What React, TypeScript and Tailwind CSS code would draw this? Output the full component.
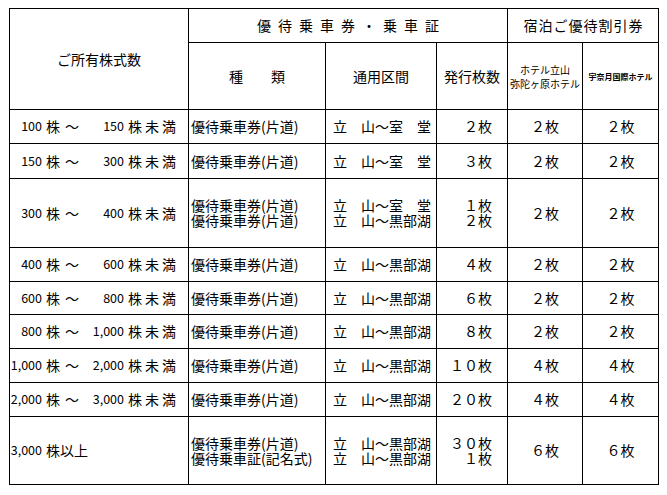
import React from 'react';

type Row = {
  a: string;
  b?: string;
  type: string[];
  sec: string[];
  n: string[];
  h1: string;
  h2: string;
};

const rows: Row[] = [
  { a: '100', b: '150', type: ['優待乗車券(片道)'], sec: ['立　山～室　堂'], n: ['２枚'], h1: '２枚', h2: '２枚' },
  { a: '150', b: '300', type: ['優待乗車券(片道)'], sec: ['立　山～室　堂'], n: ['３枚'], h1: '２枚', h2: '２枚' },
  { a: '300', b: '400', type: ['優待乗車券(片道)', '優待乗車券(片道)'], sec: ['立　山～室　堂', '立　山～黒部湖'], n: ['１枚', '２枚'], h1: '２枚', h2: '２枚' },
  { a: '400', b: '600', type: ['優待乗車券(片道)'], sec: ['立　山～黒部湖'], n: ['４枚'], h1: '２枚', h2: '２枚' },
  { a: '600', b: '800', type: ['優待乗車券(片道)'], sec: ['立　山～黒部湖'], n: ['６枚'], h1: '２枚', h2: '２枚' },
  { a: '800', b: '1,000', type: ['優待乗車券(片道)'], sec: ['立　山～黒部湖'], n: ['８枚'], h1: '２枚', h2: '２枚' },
  { a: '1,000', b: '2,000', type: ['優待乗車券(片道)'], sec: ['立　山～黒部湖'], n: ['１０枚'], h1: '４枚', h2: '４枚' },
  { a: '2,000', b: '3,000', type: ['優待乗車券(片道)'], sec: ['立　山～黒部湖'], n: ['２０枚'], h1: '４枚', h2: '４枚' },
  { a: '3,000', type: ['優待乗車券(片道)', '優待乗車証(記名式)'], sec: ['立　山～黒部湖', '立　山～黒部湖'], n: ['３０枚', '１枚'], h1: '６枚', h2: '６枚' },
];

function Lines({ items }: { items: string[] }) {
  return (
    <>
      {items.map((t, j) => (
        <React.Fragment key={j}>
          {j > 0 && <br />}
          {t}
        </React.Fragment>
      ))}
    </>
  );
}

function Shares({ a, b }: { a: string; b?: string }) {
  return (
    <div className="flex items-center whitespace-nowrap">
      <span className="w-[32px] text-right text-[12.5px]">{a}</span>
      {b ? (
        <>
          <span className="ml-[4px]">株</span>
          <span className="ml-[5px]">～</span>
          <span className="w-[45px] text-right text-[12.5px]">{b}</span>
          <span className="ml-[4px] tracking-[3px]">株未満</span>
        </>
      ) : (
        <span className="ml-[4px]">株以上</span>
      )}
    </div>
  );
}

export default function App() {
  return (
    <div className="w-[667px] h-[495px] bg-white text-black font-['Noto_Sans_CJK_JP','Liberation_Sans',sans-serif] text-[14px] pt-[8px] pl-[9px]">
      <div className="grid w-[650px] bg-black p-[1px] gap-[1px] grid-cols-[178px_136px_110px_70px_74px_75px] grid-rows-[33px_66px_33px_34px_68px_33px_32px_33px_33px_33px_67px]">
        <div className="row-span-2 bg-white flex items-center justify-center">ご所有株式数</div>
        <div className="col-span-3 bg-white flex items-center justify-center tracking-[7px] pl-[7px]">優待乗車券・乗車証</div>
        <div className="col-span-2 bg-white flex items-center justify-center tracking-[1px] pl-[1px]">宿泊ご優待割引券</div>
        <div className="bg-white flex items-center justify-center whitespace-pre">種　　類</div>
        <div className="bg-white flex items-center justify-center">通用区間</div>
        <div className="bg-white flex items-center justify-center">発行枚数</div>
        <div className="bg-white flex items-center justify-center pt-[1px]">
          <div className="text-center text-[10px] leading-[14px]">
            ホテル立山
            <br />
            弥陀ヶ原ホテル
          </div>
        </div>
        <div className="bg-white flex items-center justify-center text-[8px] font-bold pt-[1px]">宇奈月国際ホテル</div>
        {rows.map((r, i) => (
          <React.Fragment key={i}>
            <div className="bg-white flex items-center">
              <Shares a={r.a} b={r.b} />
            </div>
            <div className="bg-white flex items-center pl-[2px]">
              <div className="leading-[15px] whitespace-nowrap">
                <Lines items={r.type} />
              </div>
            </div>
            <div className="bg-white flex items-center pl-[7px]">
              <div className="leading-[15px] whitespace-pre">
                <Lines items={r.sec} />
              </div>
            </div>
            <div className="bg-white flex items-center justify-end pr-[15px]">
              <div className="leading-[15px] text-right">
                <Lines items={r.n} />
              </div>
            </div>
            <div className="bg-white flex items-center justify-center">{r.h1}</div>
            <div className="bg-white flex items-center justify-center">{r.h2}</div>
          </React.Fragment>
        ))}
      </div>
    </div>
  );
}
